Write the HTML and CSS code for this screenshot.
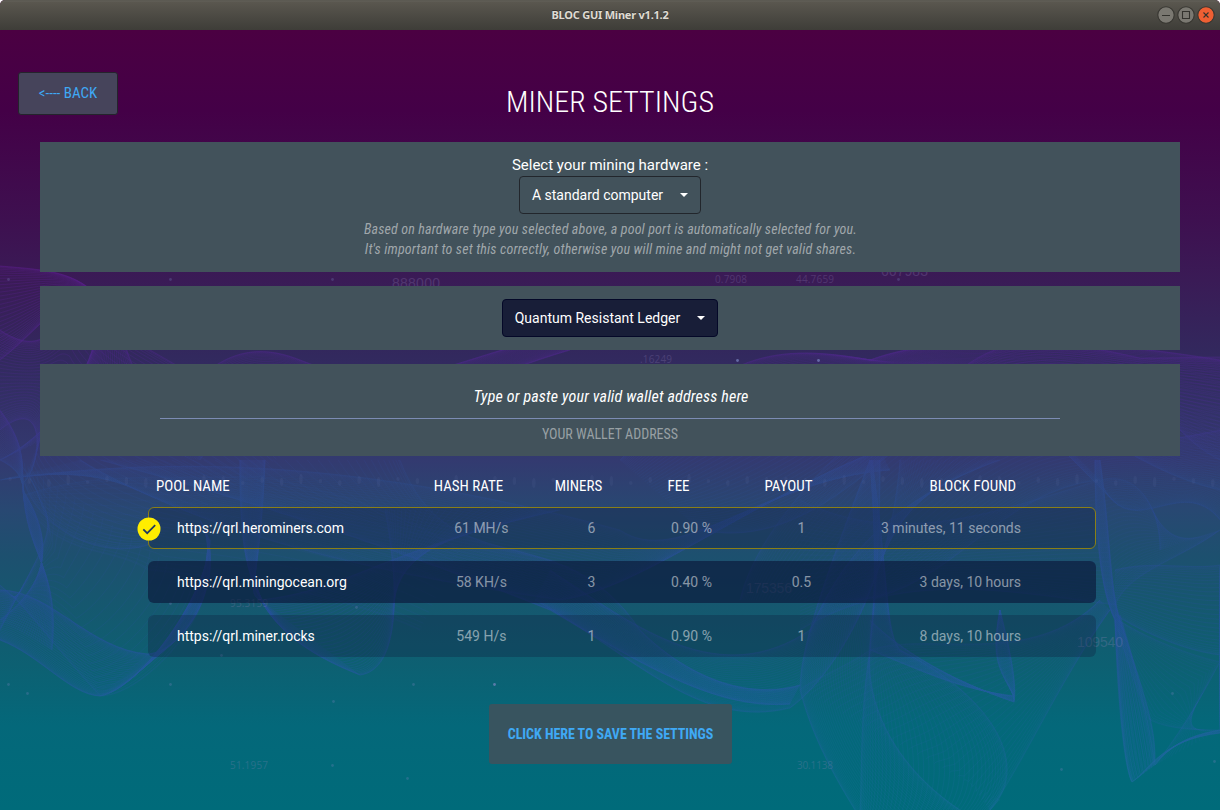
FILE: index.html
```html
<!DOCTYPE html>
<html lang="en">
<head>
<meta charset="utf-8">
<title>BLOC GUI Miner v1.1.2</title>
<link rel="stylesheet" href="styles.css">
</head>
<body>
<div class="window">
  <svg class="backdrop" viewBox="0 0 1220 780" aria-hidden="true">
    <defs>
      <linearGradient id="mesh" gradientUnits="userSpaceOnUse" x1="0" y1="230" x2="0" y2="780">
        <stop offset="0" stop-color="#5c1c8c"/>
        <stop offset=".25" stop-color="#482a8c"/>
        <stop offset=".4" stop-color="#2c4a88"/>
        <stop offset=".65" stop-color="#24509a"/>
        <stop offset="1" stop-color="#1c6ca0"/>
      </linearGradient>
    </defs>
    <g id="ribbons" fill="none" stroke="url(#mesh)" stroke-width=".65"></g>
    <g id="dots" fill="#7a86c0"></g>
    <g class="digits">
      <text x="392" y="258" textLength="48">888000</text>
      <text x="881" y="246" textLength="47">667983</text>
      <text x="746" y="563" textLength="46">175356</text>
      <text x="1077" y="617" textLength="46">109540</text>
    </g>
    <g class="digits digits-small">
      <text x="715" y="253" textLength="32">0.7908</text>
      <text x="796" y="253" textLength="38">44.7659</text>
      <text x="230" y="577" textLength="38">95.3159</text>
      <text x="230" y="739" textLength="38">51.1957</text>
      <text x="797" y="739" textLength="36">30.1138</text>
      <text x="640" y="333" textLength="32">.16249</text>
    </g>
  </svg>

  <header class="titlebar">
    <span class="titlebar-text">BLOC GUI Miner v1.1.2</span>
    <div class="controls">
      <svg class="control" viewBox="0 0 18 18"><circle class="ring" cx="9" cy="9" r="8.2"/><path d="M5 9.5h8"/></svg>
      <svg class="control" viewBox="0 0 18 18"><circle class="ring" cx="9" cy="9" r="8.2"/><path d="M5.5 5.5h7v7h-7z"/></svg>
      <svg class="control control-close" viewBox="0 0 18 18"><circle class="ring" cx="9" cy="9" r="8.2"/><path d="M6.5 6.5l5 5M11.5 6.5l-5 5"/></svg>
    </div>
  </header>

  <main class="content">
    <div class="top">
      <a class="back">&lt;---- BACK</a>
      <h1 class="heading">MINER SETTINGS</h1>
    </div>

    <section class="panel panel-hardware">
      <label class="label">Select your mining hardware :</label>
      <div class="select"><span>A standard computer</span><i class="caret"></i></div>
      <p class="hint">Based on hardware type you selected above, a pool port is automatically selected for you.<br>It's important to set this correctly, otherwise you will mine and might not get valid shares.</p>
    </section>

    <section class="panel panel-coin">
      <div class="select select-dark"><span>Quantum Resistant Ledger</span><i class="caret"></i></div>
    </section>

    <section class="panel panel-wallet">
      <div class="wallet-input"><span>Type or paste your valid wallet address here</span></div>
      <div class="wallet-label">YOUR WALLET ADDRESS</div>
    </section>

    <section class="pools">
      <div class="pool-head">
        <span>POOL NAME</span><span>HASH RATE</span><span>MINERS</span><span>FEE</span><span>PAYOUT</span><span>BLOCK FOUND</span>
      </div>
      <div class="pool pool-selected">
        <svg class="check" viewBox="0 0 24 24"><circle cx="12" cy="12" r="11.5" fill="#ffed00"/><path d="M6.3 12.3l3.9 3.9 8-8" fill="none" stroke="#1f3860" stroke-width="1.7"/></svg>
        <span>https://qrl.herominers.com</span><span>61 MH/s</span><span>6</span><span>0.90 %</span><span>1</span><span>3 minutes, 11 seconds</span>
      </div>
      <div class="pool pool-dark">
        <span>https://qrl.miningocean.org</span><span>58 KH/s</span><span>3</span><span>0.40 %</span><span>0.5</span><span>3 days, 10 hours</span>
      </div>
      <div class="pool">
        <span>https://qrl.miner.rocks</span><span>549 H/s</span><span>1</span><span>0.90 %</span><span>1</span><span>8 days, 10 hours</span>
      </div>
    </section>

    <button class="save">CLICK HERE TO SAVE THE SETTINGS</button>
  </main>
</div>
<script src="mesh.js"></script>
</body>
</html>
```

FILE: styles.css
```css
* { box-sizing: border-box; }
body {
  margin: 0;
  background: #fff;
  font-family: Roboto, "Liberation Sans", sans-serif;
  color: #fff;
}
.window {
  position: relative;
  width: 1220px;
  height: 810px;
  overflow: hidden;
  border-radius: 5px 5px 0 0;
  background: linear-gradient(#4b0042 30px, #440047 110px, #3e1050 220px, #3a1b56 280px, #32295e 357px, #333a70 460px, #284872 510px, #1d506f 555px, #15586f 608px, #0d6072 665px, #04687a 725px, #006b7a 810px);
}
.backdrop { position: absolute; left: 0; top: 30px; width: 1220px; height: 780px; }
.digits { font: 14px "Liberation Sans", sans-serif; fill: #9a8ac0; opacity: .24; }
.digits-small { font-size: 10px; font-family: "Open Sans", sans-serif; }

.titlebar {
  position: relative;
  height: 30px;
  display: flex;
  align-items: center;
  justify-content: center;
  background: linear-gradient(#55534b, #63615a 1px, #5a574f 2px, #3e3d38);
}
.titlebar-text {
  font: bold 11px/30px "Noto Sans", sans-serif;
  letter-spacing: -.22px;
  color: #dfdbd2;
  text-shadow: 0 -1px 0 #33322e;
}
.controls { position: absolute; right: 5px; top: 6px; display: flex; gap: 2px; }
.control { width: 18px; height: 18px; fill: none; stroke: #33322d; stroke-width: 1.1; }
.control .ring { fill: #7a7871; stroke: #373631; }
.control-close .ring { fill: #ee5f33; }

.content { position: relative; display: flex; flex-direction: column; align-items: center; padding: 0 40px; }
.top { width: 1140px; height: 112px; position: relative; display: flex; justify-content: center; }
.back {
  position: absolute; left: -22px; top: 42px;
  width: 100px; height: 43px;
  border: 1px solid #24242c;
  border-radius: 3px;
  background: #46445b;
  color: #3fa9f5;
  text-align: center;
  font: 15px/40px "Roboto Condensed", Roboto, sans-serif;
  font-stretch: condensed;
}
.heading {
  margin: 50px 0 0;
  font: 300 30px/44px "Roboto Condensed", Roboto, sans-serif;
  font-stretch: condensed;
}
.panel {
  width: 1140px;
  margin-bottom: 14px;
  background: #42525b;
  display: flex; flex-direction: column; align-items: center;
}
.panel-hardware { height: 130px; padding-top: 12px; }
.panel-coin { height: 64px; padding-top: 13px; }
.panel-wallet { height: 92px; padding-top: 12px; }
.label { font-size: 15px; line-height: 22px; }
.select {
  height: 38px;
  padding: 0 12px;
  border: 1px solid #22262c;
  border-radius: 4px;
  display: flex; align-items: center; gap: 17px;
  font-size: 14px;
}
.select-dark { background: #181e38; border-color: #040828; }
.caret { border: 4px solid transparent; border-top-color: #fff; border-bottom: 0; }
.hint {
  margin: 5px 0 0 1px;
  text-align: center;
  color: #a0a7ab;
  font: italic 14px/20px "Roboto Condensed", Roboto, sans-serif;
  font-stretch: condensed;
  letter-spacing: .155px;
}
.wallet-input {
  width: 900px; height: 43px;
  border-bottom: 1px solid #7c8cb4;
  padding-left: 2px;
  text-align: center;
  font: italic 16px/41px "Roboto Condensed", Roboto, sans-serif;
  font-stretch: condensed;
  letter-spacing: .16px;
}
.wallet-label {
  color: #98a0a4;
  font: 14px/30px "Roboto Condensed", Roboto, sans-serif;
  font-stretch: condensed;
}
.pools { width: 948px; margin-left: 24px; display: flex; flex-direction: column; gap: 12px; }
.pool-head, .pool { display: grid; text-align: center; }
.pool-head {
  height: 25px;
  grid-template-columns: 257.5px 110px 110px 90px 130px 162.5px;
  padding: 4px 0 0 8px;
  font: 15px/24px "Roboto Condensed", Roboto, sans-serif;
  font-stretch: condensed;
}
.pool {
  position: relative;
  height: 42px;
  grid-template-columns: 249.4px 110px 110px 90px 130px 154.6px;
  padding-left: 29px;
  border-radius: 6px;
  background: rgba(15, 25, 60, .3);
  font-size: 14px;
  line-height: 42px;
  color: rgba(255, 255, 255, .5);
}
.pool-head span:first-child, .pool span:first-of-type { text-align: left; }
.pool-head span:last-child, .pool span:last-child { text-align: right; }
.pool span:first-of-type { color: #fff; }
.pool-selected { border: 1px solid #8a7f17; padding-left: 28px; line-height: 40px; }
.pool-dark { background: rgba(9, 19, 54, .61); }
.check { position: absolute; left: -12.5px; top: 8.5px; width: 24px; height: 24px; }
.save {
  width: 243px; height: 60px;
  margin: 47px 0 0 1px;
  padding: 0;
  border: 0; border-radius: 3px;
  background: #38545f;
  color: #3fa9f5;
  font: bold 14px/59px "Roboto Condensed", Roboto, sans-serif;
  font-stretch: condensed;
  letter-spacing: -.04px;
}
```

FILE: mesh.js
```js
// Each ribbon: two cubic chains with the same number of points, a line count and an opacity.
const ribbons = [
  [[0,236, 50,240, 75,242, 100,268, 130,300, 120,330, 150,360], [0,330, 40,300, 70,250, 100,275, 100,330, 60,400, 0,430], 34, .5],
  [[0,300, 60,340, 60,260, 90,270, 120,320, 200,330, 290,420], [0,400, 50,360, 40,440, 24,452, 40,500, 100,530, 148,515], 40, .45],
  [[0,430, 20,440, 22,450, 24,462, 60,520, 40,560, 0,590], [0,380, 30,420, 20,440, 24,470, 30,530, 60,540, 52,620], 36, .45],
  [[0,560, 50,560, 90,620, 148,624, 190,620, 230,540, 200,490], [0,610, 40,625, 70,665, 100,666, 140,660, 210,560, 210,510], 38, .55],
  [[0,555, 30,580, 40,600, 100,666, 140,666, 200,600, 205,560], [0,600, 40,520, 60,500, 40,470, 30,440, 20,440, 20,430], 30, .35],
  [[240,430, 240,540, 245,600, 360,645, 400,640, 400,560, 385,480], [265,430, 260,560, 245,560, 260,570, 350,560, 380,520, 560,480], 40, .5],
  [[24,465, 100,440, 160,450, 260,446, 330,460, 400,480, 460,520], [24,472, 60,530, 110,515, 148,540, 240,550, 330,560, 420,600], 16, .3],
  [[0,450, 200,420, 400,440, 620,500, 680,540, 760,450, 890,440], [80,430, 200,500, 350,540, 560,570, 640,560, 750,470, 880,420], 44, .35],
  [[100,430, 250,470, 400,520, 550,580, 650,640, 720,680, 790,674], [400,430, 450,560, 560,480, 640,600, 680,640, 740,672, 800,655], 40, .4],
  [[535,570, 640,630, 700,700, 790,678, 830,650, 890,560, 900,430], [550,540, 640,600, 720,660, 810,600, 830,560, 860,480, 1000,430], 40, .38],
  [[870,430, 880,560, 870,600, 870,620, 860,680, 862,740, 860,780], [872,430, 890,560, 885,600, 900,620, 1000,670, 1030,740, 990,780], 44, .34],
  [[870,430, 820,560, 800,620, 800,660, 810,700, 830,740, 855,780], [880,430, 880,560, 870,600, 870,620, 865,680, 900,740, 960,780], 44, .36],
  [[870,590, 900,620, 950,650, 1014,672, 1018,650, 1005,600, 1000,580], [870,620, 920,640, 960,660, 1014,666, 1000,640, 990,630, 1000,580], 26, .4],
  [[1095,430, 1095,500, 1100,560, 1115,590, 1118,680, 1125,740, 1132,752], [1100,430, 1110,500, 1110,560, 1120,590, 1150,680, 1155,700, 1155,732], 24, .5],
  [[1115,590, 1120,680, 1125,740, 1132,752, 1150,740, 1160,710, 1220,703], [1120,585, 1140,650, 1150,700, 1155,735, 1170,715, 1190,705, 1220,700], 12, .5],
  [[1110,580, 1060,650, 1020,740, 990,780, 995,775, 998,770, 1000,770], [1100,570, 1030,640, 930,600, 870,620, 840,640, 810,650, 800,660], 36, .32],
  [[1115,585, 1140,600, 1180,620, 1220,625, 1220,660, 1220,680, 1220,700], [1115,540, 1150,530, 1190,540, 1220,535, 1220,560, 1220,580, 1220,600], 30, .4],
  [[1118,590, 1150,610, 1190,625, 1220,632, 1210,650, 1190,690, 1155,735], [1118,600, 1130,640, 1140,670, 1150,690, 1170,700, 1200,700, 1220,700], 24, .28],
  [[620,430, 720,330, 760,310, 870,330, 950,300, 1100,310, 1220,330], [700,500, 800,520, 870,440, 985,340, 1060,370, 1130,440, 1220,460], 56, .42],
  [[960,340, 1010,300, 1060,310, 1140,328, 1170,328, 1200,327, 1220,327], [1000,400, 1080,390, 1120,400, 1180,400, 1190,410, 1200,420, 1220,430], 36, .4],
  [[740,570, 760,480, 900,350, 985,335, 1050,430, 1120,420, 1220,400], [860,570, 950,560, 1000,460, 1100,450, 1130,520, 1180,440, 1220,490], 50, .36],
  [[800,470, 900,520, 1000,480, 1100,450, 1140,440, 1160,480, 1160,520], [800,600, 900,540, 1000,560, 1115,575, 1130,540, 1180,530, 1220,500], 40, .3],
  [[150,420, 200,320, 250,310, 300,330, 400,370, 450,330, 540,310], [200,430, 260,340, 300,350, 340,380, 420,380, 500,340, 570,320], 30, .4]
];

const NS = "http://www.w3.org/2000/svg";
const group = document.getElementById("ribbons");
for (const [a, b, count, alpha] of ribbons) {
  let d = "";
  for (let i = 0; i <= count; i++) {
    const t = (1 - Math.cos(Math.PI * i / count)) / 2;
    const p = a.map((v, k) => (v + (b[k] - v) * t).toFixed(1));
    d += `M${p[0]} ${p[1]}C${p.slice(2, 8).join(" ")}C${p.slice(8).join(" ")}`;
  }
  const path = document.createElementNS(NS, "path");
  path.setAttribute("d", d);
  path.setAttribute("opacity", alpha);
  group.appendChild(path);
}

const dots = [[9,249],[171,249],[333,249],[738,330],[819,330],[495,654],[414,654],[9,654],[171,573],[357,577],[171,654],[334,671],[333,735],[408,748],[1215,731],[1062,739],[1173,663],[899,249],[28,663],[222,625]];
const dotGroup = document.getElementById("dots");
for (const [x, y] of dots) {
  const c = document.createElementNS(NS, "circle");
  c.setAttribute("cx", x - .5);
  c.setAttribute("cy", y + .5);
  c.setAttribute("r", 1.4);
  c.setAttribute("opacity", y === 330 || x === 495 ? .7 : .28);
  dotGroup.appendChild(c);
}

// Faint equaliser drops along the horizon.
for (let i = 0; i < 63; i++) {
  const drop = document.createElementNS(NS, "ellipse");
  drop.setAttribute("cx", 10 + i * 19.4);
  drop.setAttribute("cy", 449 + (i * 7 % 5));
  drop.setAttribute("rx", 1.8);
  drop.setAttribute("ry", 2 + (i * 5 % 4));
  drop.setAttribute("opacity", .09);
  dotGroup.appendChild(drop);
}
```
